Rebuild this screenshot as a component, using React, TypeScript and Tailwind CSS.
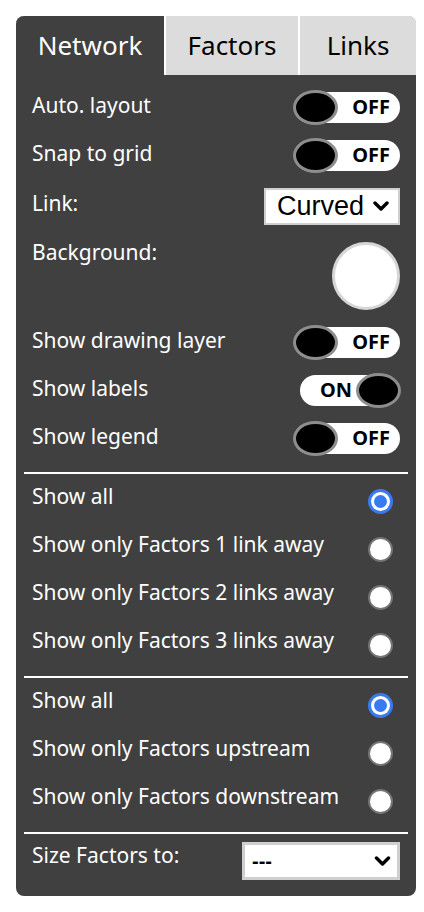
import React from "react";

const font = { fontFamily: '"Noto Sans", "Open Sans", sans-serif' };

function Toggle({ on }: { on: boolean }) {
  return (
    <div
      className={
        on
          ? "relative mr-[2px] h-[31px] w-[98px] rounded-full bg-white"
          : "relative h-[31px] w-[106px] rounded-full bg-white"
      }
    >
      <div
        className={
          on
            ? "absolute right-[-3px] top-[-2px] h-[35px] w-[45px] rounded-[50%] border-[3px] border-[#8d8d8d] bg-black"
            : "absolute left-[-1px] top-[-2px] h-[35px] w-[45px] rounded-[50%] border-[3px] border-[#8d8d8d] bg-black"
        }
      />
      <div
        className={
          on
            ? "absolute left-[20px] top-0 flex h-full items-center text-[20px] font-bold text-black"
            : "absolute right-[10px] top-0 flex h-full items-center text-[20px] font-bold text-black"
        }
      >
        {on ? "ON" : "OFF"}
      </div>
    </div>
  );
}

function Chevron({ className }: { className: string }) {
  return (
    <svg className={className} viewBox="0 0 16 10" fill="none">
      <path d="M2 2 L8 8 L14 2" stroke="black" strokeWidth="3.4" strokeLinecap="round" strokeLinejoin="round" />
    </svg>
  );
}

function Radio({ checked }: { checked: boolean }) {
  if (checked) {
    return (
      <div className="flex h-[25px] w-[25px] items-center justify-center rounded-full bg-[#3a7af0]">
        <div className="flex h-[19px] w-[19px] items-center justify-center rounded-full bg-white">
          <div className="h-[13px] w-[13px] rounded-full bg-[#3a7af0]" />
        </div>
      </div>
    );
  }
  return <div className="h-[25px] w-[25px] rounded-full border-2 border-[#747474] bg-white" />;
}

function ToggleRow({ label, on }: { label: string; on: boolean }) {
  return (
    <div className="flex h-[48px] items-center justify-between">
      <span className="mb-[4px] text-[21px] leading-[28px] text-white">{label}</span>
      <Toggle on={on} />
    </div>
  );
}

function RadioRow({ label, checked }: { label: string; checked: boolean }) {
  return (
    <div className="flex h-[48px] items-center justify-between pr-[7px]">
      <span className="mb-[10px] text-[21px] leading-[28px] text-white">{label}</span>
      <Radio checked={checked} />
    </div>
  );
}

function Divider() {
  return <div className="mx-[8px] h-[2px] bg-white" />;
}

export default function App() {
  return (
    <div className="min-h-[912px] w-[424px] bg-white pt-[16px]" style={font}>
      <div className="mx-[16px] w-[400px] overflow-hidden rounded-[8px] bg-[#404040] pb-[16px]">
        <div className="flex h-[59px] gap-[2px] bg-white">
          <div className="flex w-[148px] items-center justify-center bg-[#404040] text-[26px] text-white">
            Network
          </div>
          <div className="flex w-[132px] items-center justify-center bg-[#dcdcdc] text-[26px] text-black">
            Factors
          </div>
          <div className="flex flex-1 items-center justify-center bg-[#dcdcdc] text-[26px] text-black">
            Links
          </div>
        </div>

        <div className="px-[16px] pt-[8px]">
          <ToggleRow label="Auto. layout" on={false} />
          <ToggleRow label="Snap to grid" on={false} />
          <div className="flex h-[54px] items-center justify-between">
            <span className="mb-[6px] text-[21px] leading-[28px] text-white">Link:</span>
            <div
              className="flex h-[37px] w-[136px] items-center justify-between border-2 border-[#cfcfcf] bg-white pl-[11px] pr-[9px] text-[27px] text-black"
              style={{ fontFamily: '"Liberation Sans", Arial, sans-serif' }}
            >
              <span>Curved</span>
              <Chevron className="h-[10px] w-[16px]" />
            </div>
          </div>
          <div className="mt-[9px] flex h-[68px] items-start justify-between">
            <span className="-mt-[4px] text-[21px] leading-[28px] text-white">Background:</span>
            <div className="h-[68px] w-[68px] rounded-full border-[3px] border-[#d6d6d6] bg-white" />
          </div>
          <div className="mt-[8px]">
            <ToggleRow label="Show drawing layer" on={false} />
            <ToggleRow label="Show labels" on={true} />
            <ToggleRow label="Show legend" on={false} />
          </div>
        </div>

        <div className="mt-[10px]">
          <Divider />
        </div>
        <div className="mt-[3px] px-[16px]">
          <RadioRow label="Show all" checked={true} />
          <RadioRow label="Show only Factors 1 link away" checked={false} />
          <RadioRow label="Show only Factors 2 links away" checked={false} />
          <RadioRow label="Show only Factors 3 links away" checked={false} />
        </div>
        <div className="mt-[7px]">
          <Divider />
        </div>
        <div className="mt-[3px] px-[16px]">
          <RadioRow label="Show all" checked={true} />
          <RadioRow label="Show only Factors upstream" checked={false} />
          <RadioRow label="Show only Factors downstream" checked={false} />
        </div>
        <div className="mt-[7px]">
          <Divider />
        </div>
        <div className="mt-[8px] flex h-[38px] items-center justify-between px-[16px]">
          <span className="mb-[12px] text-[21px] leading-[28px] text-white">Size Factors to:</span>
          <div className="flex h-[38px] w-[158px] items-center justify-between border-[3px] border-[#cfcfcf] bg-white pl-[7px] pr-[6px]">
            <span
              className="text-[20px] font-bold leading-none text-black"
              style={{ fontFamily: '"Liberation Sans", Arial, sans-serif' }}
            >
              ---
            </span>
            <Chevron className="h-[10px] w-[17px]" />
          </div>
        </div>
      </div>
    </div>
  );
}
